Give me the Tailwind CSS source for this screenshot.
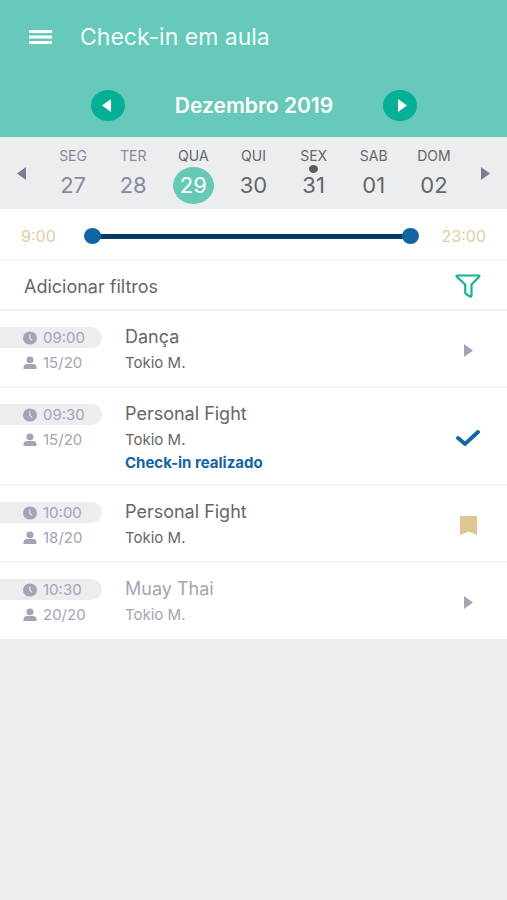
<!DOCTYPE html>
<html lang="pt-BR">
<head>
<meta charset="utf-8">
<meta name="viewport" content="width=device-width, initial-scale=1">
<title>Check-in em aula</title>
<script src="https://cdn.jsdelivr.net/npm/@tailwindcss/browser@4"></script>
</head>
<body class="min-h-screen bg-[#ebedef] font-['Inter','Open_Sans',sans-serif] text-[#666668]">
<svg class="hidden" aria-hidden="true">
  <symbol id="clock" viewBox="0 0 14 14"><ellipse cx="7" cy="7" rx="7" ry="6.6" fill="#a4a4b6"/><path d="M6.8 3.6V7.2L9 9.4" fill="none" stroke="#e4e5ec" stroke-width="1.3"/></symbol>
  <symbol id="person" viewBox="0 0 14 14"><ellipse cx="7" cy="3.9" rx="3.5" ry="3.3" fill="#a4a4b6"/><path d="M.5 13V11.200C.5 9.200 2 8 4 8H10C12 8 13.500 9.200 13.500 11.200V13Z" fill="#a4a4b6"/></symbol>
  <symbol id="right" viewBox="0 0 9 13"><path d="M0 0L9 6.500L0 13Z" fill="currentColor"/></symbol>
  <symbol id="left" viewBox="0 0 9 13"><path d="M9 0L0 6.500L9 13Z" fill="currentColor"/></symbol>
</svg>

<header class="bg-[#66c9b9] text-white">
  <div class="flex h-[74px] items-center pl-[29px]">
    <button type="button" aria-label="Menu">
      <svg class="h-[14px] w-[23px]" viewBox="0 0 23 14"><path d="M0 1.500H23M0 7H23M0 12.500H23" stroke="#fff" stroke-width="2.800"/></svg>
    </button>
    <h1 class="pl-7 text-[23px] leading-7 text-[#f0fffc]">Check-in em aula</h1>
  </div>
  <div class="flex h-[63px] items-center justify-between pr-[90px] pl-[91px]">
    <button type="button" aria-label="Mês anterior" class="flex h-[31px] w-[34px] items-center justify-center rounded-[50%] bg-[#04b095]">
      <svg class="mr-1 h-[13px] w-[9px]"><use href="#left"/></svg>
    </button>
    <h2 class="text-[21px] leading-6 font-semibold">Dezembro 2019</h2>
    <button type="button" aria-label="Próximo mês" class="flex h-[31px] w-[34px] items-center justify-center rounded-[50%] bg-[#04b095]">
      <svg class="ml-1 h-[13px] w-[9px]"><use href="#right"/></svg>
    </button>
  </div>
</header>

<main>
  <nav aria-label="Dias" class="flex h-[72px] items-stretch bg-[#ebedef]">
    <button type="button" aria-label="Semana anterior" class="flex w-[43px] items-center justify-center text-[#7c7c92]"><svg class="h-[13px] w-[9px]"><use href="#left"/></svg></button>
    <div class="grid flex-1 grid-cols-7">
      <button type="button" class="flex flex-col items-center pt-[10px] text-[#8a8a9d]"><span class="text-[14px] leading-[18px]">SEG</span><span class="flex h-[41px] items-center text-[22px]">27</span></button>
      <button type="button" class="flex flex-col items-center pt-[10px] text-[#8a8a9d]"><span class="text-[14px] leading-[18px]">TER</span><span class="flex h-[41px] items-center text-[22px]">28</span></button>
      <button type="button" aria-pressed="true" class="flex flex-col items-center pt-[10px]"><span class="text-[14px] leading-[18px]">QUA</span><span class="flex h-[41px] items-center text-[22px]"><span class="flex h-[37px] w-[41px] items-center justify-center rounded-[50%] bg-[#66c9b5] text-white">29</span></span></button>
      <button type="button" class="flex flex-col items-center pt-[10px]"><span class="text-[14px] leading-[18px]">QUI</span><span class="flex h-[41px] items-center text-[22px]">30</span></button>
      <button type="button" class="relative flex flex-col items-center pt-[10px]"><span class="text-[14px] leading-[18px]">SEX</span><span class="absolute top-7 h-2 w-[9px] rounded-[50%] bg-[#5c5c5e]"></span><span class="flex h-[41px] items-center text-[22px]">31</span></button>
      <button type="button" class="flex flex-col items-center pt-[10px]"><span class="text-[14px] leading-[18px]">SAB</span><span class="flex h-[41px] items-center text-[22px]">01</span></button>
      <button type="button" class="flex flex-col items-center pt-[10px]"><span class="text-[14px] leading-[18px]">DOM</span><span class="flex h-[41px] items-center text-[22px]">02</span></button>
    </div>
    <button type="button" aria-label="Próxima semana" class="flex w-[43px] items-center justify-center text-[#7c7c92]"><svg class="h-[13px] w-[9px]"><use href="#right"/></svg></button>
  </nav>

  <section class="bg-white">
    <div class="flex h-[52px] items-center border-b-2 border-[#f3f3f4] px-[21px] pt-1 text-[16px] text-[#dccf9f]">
      <label for="start" class="w-[63px]">9:00</label>
      <div class="relative flex h-4 flex-1 items-center">
        <div class="mx-2 h-[5px] flex-1 bg-[#043b68]"></div>
        <input id="start" type="range" min="9" max="23" value="9" class="pointer-events-none absolute inset-0 h-full w-full appearance-none bg-transparent [&::-webkit-slider-thumb]:pointer-events-auto [&::-webkit-slider-thumb]:h-4 [&::-webkit-slider-thumb]:w-[17px] [&::-webkit-slider-thumb]:appearance-none [&::-webkit-slider-thumb]:rounded-[50%] [&::-webkit-slider-thumb]:bg-[#1265a3]">
        <input id="end" type="range" min="9" max="23" value="23" class="pointer-events-none absolute inset-0 h-full w-full appearance-none bg-transparent [&::-webkit-slider-thumb]:pointer-events-auto [&::-webkit-slider-thumb]:h-4 [&::-webkit-slider-thumb]:w-[17px] [&::-webkit-slider-thumb]:appearance-none [&::-webkit-slider-thumb]:rounded-[50%] [&::-webkit-slider-thumb]:bg-[#1265a3]">
      </div>
      <label for="end" class="w-[67px] text-right">23:00</label>
    </div>

    <button type="button" class="flex h-[50px] w-full items-center justify-between border-b-2 border-[#f0f0f1] pt-[2px] pr-[26px] pl-6 text-[18px]">
      <span>Adicionar filtros</span>
      <svg class="h-6 w-[26px]" viewBox="0 0 26 24" fill="none" stroke="#14b394" stroke-width="2.200" stroke-linejoin="round"><path d="M2.500 1.500H23.500Q25 1.500 24.200 2.800L16.500 10.500V21.500Q16.500 23 15 22.500L11 20Q10.200 19.400 10.200 18.500V10.500L1.800 2.800Q1 1.500 2.500 1.500Z"/></svg>
    </button>

    <ul>
      <li>
        <a href="#danca" class="flex items-stretch border-b-2 border-[#f3f3f4] pt-4 pb-[13px]">
          <div class="w-[125px] text-[15px] leading-5 text-[#a4a4b4]">
            <div class="flex h-[21px] w-[102px] items-center gap-[6px] rounded-r-full bg-[#ebedef] pl-[23px]"><svg class="h-[14px] w-[14px]"><use href="#clock"/></svg>09:00</div>
            <div class="mt-[5px] flex items-center gap-[6px] pl-[23px]"><svg class="h-[14px] w-[14px]"><use href="#person"/></svg>15/20</div>
          </div>
          <div class="flex-1"><h3 class="text-[18px] leading-5">Dança</h3><p class="mt-[6px] text-[15px] leading-5">Tokio M.</p></div>
          <div class="flex w-[78px] items-center justify-center text-[#a4a4b4]"><svg class="h-[13px] w-[9px]"><use href="#right"/></svg></div>
        </a>
      </li>
      <li>
        <a href="#fight-0930" class="flex items-stretch border-b-2 border-[#f3f3f4] pt-4 pb-3">
          <div class="w-[125px] text-[15px] leading-5 text-[#a4a4b4]">
            <div class="flex h-[21px] w-[102px] items-center gap-[6px] rounded-r-full bg-[#ebedef] pl-[23px]"><svg class="h-[14px] w-[14px]"><use href="#clock"/></svg>09:30</div>
            <div class="mt-[5px] flex items-center gap-[6px] pl-[23px]"><svg class="h-[14px] w-[14px]"><use href="#person"/></svg>15/20</div>
          </div>
          <div class="flex-1"><h3 class="text-[18px] leading-5">Personal Fight</h3><p class="mt-[6px] text-[15px] leading-5">Tokio M.</p><p class="mt-1 text-[15px] leading-[18px] font-bold text-[#1265a3]">Check-in realizado</p></div>
          <div class="flex w-[78px] items-center justify-center"><svg class="h-4 w-6" viewBox="0 0 24 16"><path d="M2 8L9 14L22 2" fill="none" stroke="#1265a3" stroke-width="3.800" stroke-linecap="round"/></svg></div>
        </a>
      </li>
      <li>
        <a href="#fight-1000" class="flex items-stretch border-b-2 border-[#f3f3f4] pt-4 pb-[13px]">
          <div class="w-[125px] text-[15px] leading-5 text-[#a4a4b4]">
            <div class="flex h-[21px] w-[102px] items-center gap-[6px] rounded-r-full bg-[#ebedef] pl-[23px]"><svg class="h-[14px] w-[14px]"><use href="#clock"/></svg>10:00</div>
            <div class="mt-[5px] flex items-center gap-[6px] pl-[23px]"><svg class="h-[14px] w-[14px]"><use href="#person"/></svg>18/20</div>
          </div>
          <div class="flex-1"><h3 class="text-[18px] leading-5">Personal Fight</h3><p class="mt-[6px] text-[15px] leading-5">Tokio M.</p></div>
          <div class="flex w-[78px] items-center justify-center"><svg class="h-[19px] w-[17px]" viewBox="0 0 17 19"><path d="M1 0H16Q17 0 17 1V19L8.500 15.500L0 19V1Q0 0 1 0Z" fill="#dcc792"/></svg></div>
        </a>
      </li>
      <li>
        <a href="#muay-thai" class="flex items-stretch pt-4 pb-[14px]">
          <div class="w-[125px] text-[15px] leading-5 text-[#a4a4b4]">
            <div class="flex h-[21px] w-[102px] items-center gap-[6px] rounded-r-full bg-[#ebedef] pl-[23px]"><svg class="h-[14px] w-[14px]"><use href="#clock"/></svg>10:30</div>
            <div class="mt-[5px] flex items-center gap-[6px] pl-[23px]"><svg class="h-[14px] w-[14px]"><use href="#person"/></svg>20/20</div>
          </div>
          <div class="flex-1 text-[#a4a4b4]"><h3 class="text-[18px] leading-5">Muay Thai</h3><p class="mt-[6px] text-[15px] leading-5">Tokio M.</p></div>
          <div class="flex w-[78px] items-center justify-center text-[#a4a4b4]"><svg class="h-[13px] w-[9px]"><use href="#right"/></svg></div>
        </a>
      </li>
    </ul>
  </section>
</main>
</body>
</html>
